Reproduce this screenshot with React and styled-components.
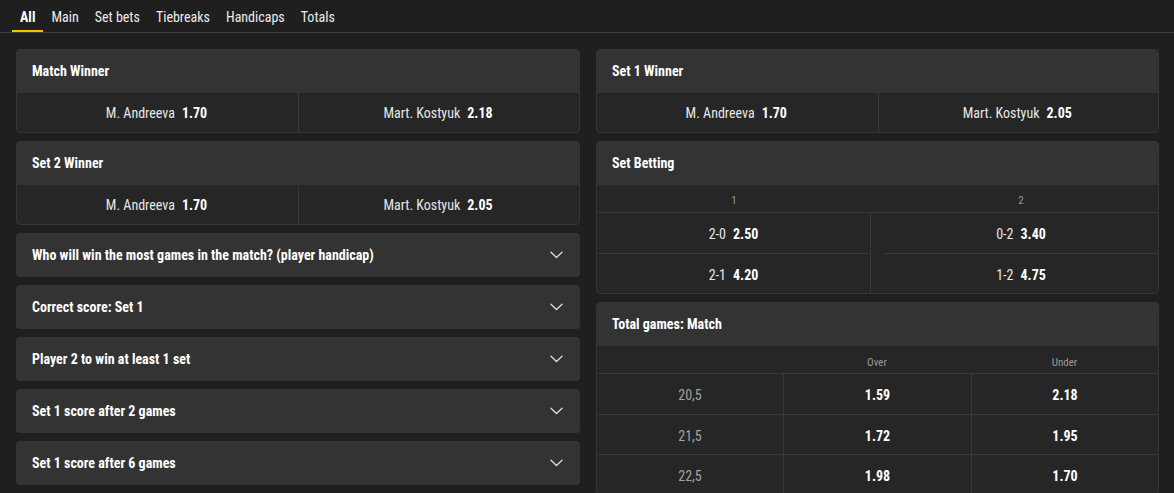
import React from "react";
import styled, { createGlobalStyle } from "styled-components";

const GlobalStyle = createGlobalStyle`
  html, body {
    margin: 0;
    padding: 0;
    background: #1f1f1f;
  }
  body {
    font-family: "Liberation Sans Narrow", "Roboto Condensed", "DejaVu Sans Condensed", Roboto, sans-serif;
    color: #f2f2f2;
    -webkit-font-smoothing: antialiased;
  }
  * { box-sizing: border-box; }
`;

const Page = styled.div`
  width: 1174px;
  min-height: 493px;
  background: #1f1f1f;
`;

const TabBar = styled.nav`
  display: flex;
  height: 33px;
  padding: 0 12px;
  border-bottom: 1px solid #3f3f3f;
`;

const Tab = styled.div`
  display: flex;
  align-items: center;
  height: 32px;
  padding: 2px 8px 0;
  font-size: 14px;
  font-weight: ${(p) => (p.$active ? 700 : 400)};
  color: ${(p) => (p.$active ? "#ffffff" : "#ececec")};
  box-shadow: ${(p) => (p.$active ? "inset 0 -2px 0 #f6c300" : "none")};
`;

const Columns = styled.div`
  display: grid;
  grid-template-columns: 564px 563px;
  column-gap: 16px;
  padding: 16px 15px 0 16px;
`;

const Column = styled.div`
  display: flex;
  flex-direction: column;
  gap: 8px;
`;

const Card = styled.section`
  background: #262626;
  border: 1px solid #353535;
  border-radius: 4px;
  overflow: hidden;
`;

const CardHeader = styled.header`
  display: flex;
  align-items: center;
  height: 43px;
  padding: 0 15px 1px;
  background: #333333;
  font-size: 14px;
  font-weight: 700;
  color: #ffffff;
`;

const TwoCols = styled.div`
  display: grid;
  grid-template-columns: ${(p) => p.$cols || "1fr 1fr"};
`;

const OddsCell = styled.div`
  display: flex;
  align-items: center;
  justify-content: center;
  gap: 7px;
  height: 39px;
  padding-right: 2px;
  font-size: 14px;
  color: #e6e6e6;
  & + & {
    border-left: 1px solid #383838;
  }
`;

const Price = styled.span`
  font-weight: 700;
  color: #ffffff;
`;

const LabelRow = styled.div`
  display: grid;
  grid-template-columns: ${(p) => p.$cols};
  height: 28px;
  border-bottom: 1px solid #383838;
`;

const Label = styled.div`
  display: flex;
  align-items: center;
  justify-content: center;
  padding-top: ${(p) => (p.$low ? "5px" : "3px")};
  margin-left: ${(p) => (p.$inset ? "13px" : "0")};
  font-size: 11px;
  color: #9a9a9a;
`;

const SetCol = styled.div`
  display: flex;
  flex-direction: column;
  border-right: ${(p) => (p.$divided ? "1px solid #383838" : "none")};
`;

const SetCell = styled.div`
  display: flex;
  align-items: center;
  justify-content: center;
  gap: 7px;
  height: 40px;
  padding-top: 2px;
  font-size: 14px;
  color: #e6e6e6;
  margin-left: ${(p) => (p.$inset ? "13px" : "0")};
  & + & {
    border-top: 1px solid #383838;
  }
`;

const TotalsRow = styled.div`
  display: grid;
  grid-template-columns: 186px 188px 1fr;
  height: 40px;
  & + & {
    border-top: 1px solid #383838;
  }
`;

const TotalsCell = styled.div`
  display: flex;
  align-items: center;
  justify-content: center;
  padding-top: 2px;
  font-size: 14px;
  font-weight: ${(p) => (p.$line ? 400 : 700)};
  color: ${(p) => (p.$line ? "#a3a3a3" : "#ffffff")};
  & + & {
    border-left: 1px solid #383838;
  }
`;

const Accordion = styled.button`
  display: flex;
  align-items: center;
  justify-content: space-between;
  width: 100%;
  height: 44px;
  padding: 0 16px 0 16px;
  border: none;
  border-radius: 4px;
  background: #333333;
  font-family: inherit;
  font-size: 14px;
  font-weight: 700;
  color: #ffffff;
  text-align: left;
  cursor: pointer;
`;

const ChevronIcon = styled.svg`
  flex: none;
  margin-right: 1px;
`;

const Chevron = () => (
  <ChevronIcon width="13" height="8" viewBox="0 0 13 8" fill="none">
    <path d="M1 1.2l5.5 5.3 5.5-5.3" stroke="#dcdcdc" strokeWidth="1.3" strokeLinecap="round" strokeLinejoin="round" />
  </ChevronIcon>
);

const WinnerCard = ({ title, home, homePrice, away, awayPrice }) => (
  <Card>
    <CardHeader>{title}</CardHeader>
    <TwoCols>
      <OddsCell>
        {home}
        <Price>{homePrice}</Price>
      </OddsCell>
      <OddsCell>
        {away}
        <Price>{awayPrice}</Price>
      </OddsCell>
    </TwoCols>
  </Card>
);

const tabs = ["All", "Main", "Set bets", "Tiebreaks", "Handicaps", "Totals"];

const collapsed = [
  "Who will win the most games in the match? (player handicap)",
  "Correct score: Set 1",
  "Player 2 to win at least 1 set",
  "Set 1 score after 2 games",
  "Set 1 score after 6 games",
];

const setBetting = [
  [
    ["2-0", "2.50"],
    ["2-1", "4.20"],
  ],
  [
    ["0-2", "3.40"],
    ["1-2", "4.75"],
  ],
];

const totals = [
  ["20,5", "1.59", "2.18"],
  ["21,5", "1.72", "1.95"],
  ["22,5", "1.98", "1.70"],
];

export default function App() {
  return (
    <Page>
      <GlobalStyle />
      <TabBar>
        {tabs.map((t, i) => (
          <Tab key={t} $active={i === 0}>
            {t}
          </Tab>
        ))}
      </TabBar>
      <Columns>
        <Column>
          <WinnerCard title="Match Winner" home="M. Andreeva" homePrice="1.70" away="Mart. Kostyuk" awayPrice="2.18" />
          <WinnerCard title="Set 2 Winner" home="M. Andreeva" homePrice="1.70" away="Mart. Kostyuk" awayPrice="2.05" />
          {collapsed.map((title) => (
            <Accordion key={title}>
              {title}
              <Chevron />
            </Accordion>
          ))}
        </Column>
        <Column>
          <WinnerCard title="Set 1 Winner" home="M. Andreeva" homePrice="1.70" away="Mart. Kostyuk" awayPrice="2.05" />
          <Card>
            <CardHeader>Set Betting</CardHeader>
            <LabelRow $cols="274px 1fr">
              <Label>1</Label>
              <Label $inset>2</Label>
            </LabelRow>
            <TwoCols $cols="274px 1fr">
              {setBetting.map((col, ci) => (
                <SetCol key={ci} $divided={ci === 0}>
                  {col.map(([score, price]) => (
                    <SetCell key={score} $inset={ci === 1}>
                      {score}
                      <Price>{price}</Price>
                    </SetCell>
                  ))}
                </SetCol>
              ))}
            </TwoCols>
          </Card>
          <Card>
            <CardHeader>Total games: Match</CardHeader>
            <LabelRow $cols="186px 188px 1fr">
              <Label $low />
              <Label $low>Over</Label>
              <Label $low>Under</Label>
            </LabelRow>
            {totals.map(([line, over, under]) => (
              <TotalsRow key={line}>
                <TotalsCell $line>{line}</TotalsCell>
                <TotalsCell>{over}</TotalsCell>
                <TotalsCell>{under}</TotalsCell>
              </TotalsRow>
            ))}
          </Card>
        </Column>
      </Columns>
    </Page>
  );
}
